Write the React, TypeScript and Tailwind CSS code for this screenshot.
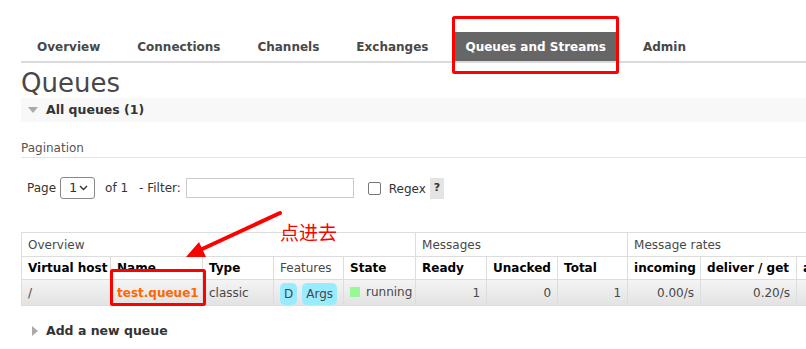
const tabs = ['Overview', 'Connections', 'Channels', 'Exchanges', 'Queues and Streams', 'Admin'];

const Th = ({ children, right = false }: { children: React.ReactNode; right?: boolean }) => (
  <th className={`border border-[#ddd] px-[6px] h-[23px] font-bold text-black whitespace-nowrap overflow-hidden ${right ? 'text-right' : 'text-left'}`}>
    {children}
  </th>
);

const Td = ({ children, right = false }: { children?: React.ReactNode; right?: boolean }) => (
  <td className={`border border-[#ddd] px-[6px] h-[26px] whitespace-nowrap overflow-hidden ${right ? 'text-right' : 'text-left'}`}>
    {children}
  </td>
);

const Annotations = () => (
  <svg className="absolute left-0 top-0 pointer-events-none" width="806" height="349">
    <rect x="453.5" y="17.5" width="164" height="55" fill="none" stroke="#f00" strokeWidth="3" rx="1" />
    <rect x="111.5" y="270.5" width="93" height="34" fill="none" stroke="#f00" strokeWidth="3" rx="1" />
    <line x1="280" y1="213" x2="200" y2="250" stroke="#f00" strokeWidth="4" strokeLinecap="round" />
    <polygon points="186,257 206,257 199,242" fill="#f00" />
  </svg>
);

export default function App() {
  return (
    <div className="relative w-[806px] h-[349px] overflow-hidden bg-white pl-[21px] text-[12px] text-[#484848] font-['DejaVu_Sans',Verdana,sans-serif]">
      <nav className="mt-[32px] flex border-b-2 border-[#dadada] pl-[4px]">
        {tabs.map((t) => (
          <div
            key={t}
            className={`mr-[13px] h-[29px] px-[12px] flex items-center font-bold text-[12px] ${
              t === 'Queues and Streams' ? 'bg-[#666] text-white' : 'text-[#484848]'
            }`}
          >
            {t}
          </div>
        ))}
      </nav>

      <h1 className="mt-[6px] text-[26px] leading-[29px] text-[#484848]">Queues</h1>

      <div className="h-[24px] bg-[#f8f8f8] flex items-center pl-[7px]">
        <span className="w-0 h-0 border-l-[5px] border-r-[5px] border-t-[6px] border-l-transparent border-r-transparent border-t-[#aaa]" />
        <span className="ml-[8px] font-bold text-[12.5px] text-[#333]">All queues (1)</span>
      </div>

      <div className="mt-[19px] border-b border-[#e4e4e4] pb-[2px] text-[12px] leading-[14px] text-[#555]">Pagination</div>

      <div className="mt-[19px] flex items-center pl-[6px] h-[22px] text-[12px] text-[#333]">
        <span>Page</span>
        <div className="ml-[4px] w-[35px] h-[22px] border border-[#888] rounded-[3px] flex items-center justify-between pl-[8px] pr-[6px] text-[13px]">
          <span>1</span>
          <svg width="9" height="6" viewBox="0 0 9 6">
            <path d="M1 1l3.5 3.5L8 1" fill="none" stroke="#333" strokeWidth="1.4" />
          </svg>
        </div>
        <span className="ml-[10px]">of 1</span>
        <span className="ml-[11px]">- Filter:</span>
        <div className="ml-[5px] w-[168px] h-[20px] border border-[#ccc]" />
        <div className="ml-[14px] w-[13px] h-[13px] border border-[#777] rounded-[2px]" />
        <span className="ml-[8px] mt-[2px]">Regex</span>
        <span className="ml-[4px] w-[14px] h-[21px] bg-[#e4e4e4] flex items-center justify-center font-bold text-[11px]">?</span>
      </div>

      <div className="absolute left-[280px] top-[220px] text-[19px] leading-[24px] text-[#f00] font-['Noto_Sans_CJK_SC',sans-serif]">
        点进去
      </div>

      <table className="mt-[33px] border-collapse table-fixed w-[855px] text-[12px]">
        <colgroup>
          <col className="w-[89px]" />
          <col className="w-[92px]" />
          <col className="w-[71px]" />
          <col className="w-[70px]" />
          <col className="w-[72px]" />
          <col className="w-[71px]" />
          <col className="w-[71px]" />
          <col className="w-[70px]" />
          <col className="w-[73px]" />
          <col className="w-[96px]" />
          <col className="w-[80px]" />
        </colgroup>
        <thead>
          <tr>
            <td colSpan={5} className="border border-[#ddd] px-[6px] h-[24px] text-[#484848]">Overview</td>
            <td colSpan={3} className="border border-[#ddd] px-[6px] h-[24px] text-[#484848]">Messages</td>
            <td colSpan={3} className="border border-[#ddd] px-[6px] h-[24px] text-[#484848]">Message rates</td>
          </tr>
          <tr>
            <Th>Virtual host</Th>
            <Th>Name</Th>
            <Th>Type</Th>
            <th className="border border-[#ddd] px-[6px] h-[23px] font-normal text-left text-[#484848]">Features</th>
            <Th>State</Th>
            <Th>Ready</Th>
            <Th>Unacked</Th>
            <Th>Total</Th>
            <Th>incoming</Th>
            <Th>deliver / get</Th>
            <Th>ack</Th>
          </tr>
        </thead>
        <tbody>
          <tr className="bg-gradient-to-b from-[#f4f4f4] to-[#e2e2e2]">
            <Td>/</Td>
            <Td>
              <span className="font-bold text-[#f60]">test.queue1</span>
            </Td>
            <Td>classic</Td>
            <Td>
              <span className="inline-flex gap-[5px] items-center mt-[2px]">
                <span className="bg-[#99ebff] rounded-[5px] px-[4px] py-[2px]">D</span>
                <span className="bg-[#99ebff] rounded-[5px] px-[4px] py-[2px]">Args</span>
              </span>
            </Td>
            <Td>
              <span className="inline-flex items-center gap-[6px]">
                <span className="w-[10px] h-[10px] bg-[#98f898]" />
                running
              </span>
            </Td>
            <Td right>1</Td>
            <Td right>0</Td>
            <Td right>1</Td>
            <Td right>0.00/s</Td>
            <Td right>0.20/s</Td>
            <Td right>0.00/s</Td>
          </tr>
        </tbody>
      </table>

      <div className="mt-[16px] flex items-center pl-[11px]">
        <span className="w-0 h-0 border-t-[5px] border-b-[5px] border-l-[6px] border-t-transparent border-b-transparent border-l-[#aaa]" />
        <span className="ml-[8px] font-bold text-[12.5px] text-[#333]">Add a new queue</span>
      </div>

      <Annotations />
    </div>
  );
}
